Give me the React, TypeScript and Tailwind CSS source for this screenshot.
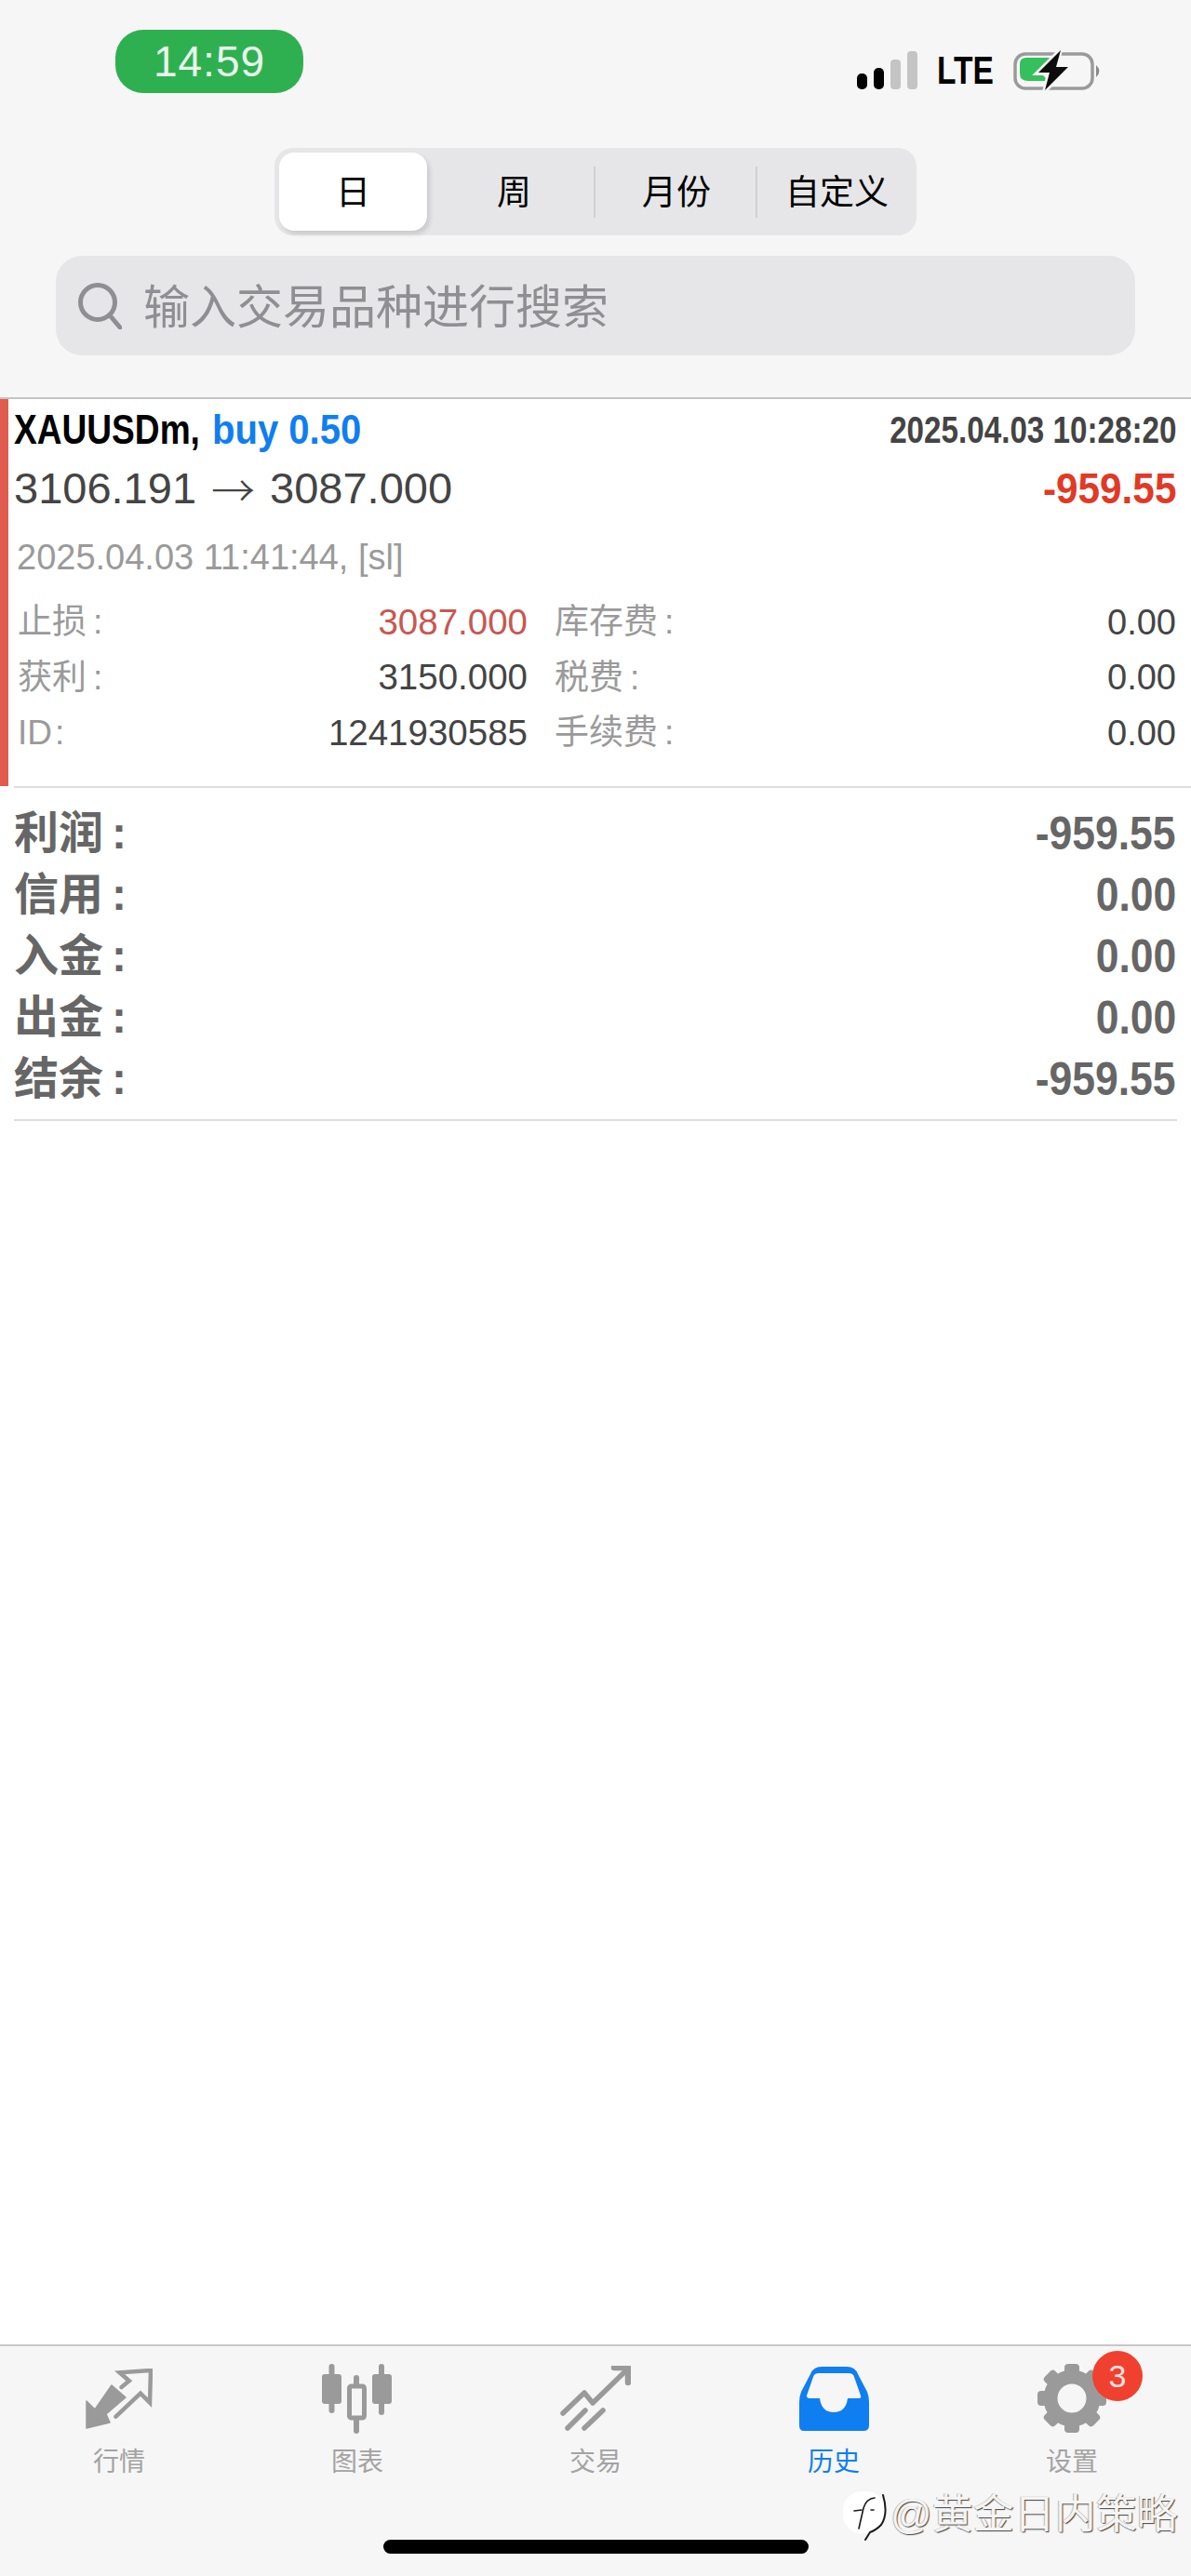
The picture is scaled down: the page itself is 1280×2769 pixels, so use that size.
import React from "react";

const FONT = "font-['Liberation_Sans','Noto_Sans_CJK_SC',sans-serif]";

function Signal() {
  return (
    <div className="flex items-end gap-[7px] h-[41px]">
      <div className="w-[11px] h-[17px] rounded-[5px] bg-black" />
      <div className="w-[11px] h-[23px] rounded-[5px] bg-black" />
      <div className="w-[11px] h-[32px] rounded-[4px] bg-[#c4c4c4]" />
      <div className="w-[11px] h-[41px] rounded-[4px] bg-[#c4c4c4]" />
    </div>
  );
}

function Battery() {
  return (
    <svg width="96" height="46" viewBox="0 0 96 46" className="block">
      <rect x="2" y="5" width="83" height="37" rx="11" fill="none" stroke="#9a9a9a" strokeWidth="3.5" />
      <path d="M10 9 H44 L31 27 L38 34 H16 Q7 34 7 26 V16 Q7 9 14 9 Z" fill="#35c05c" />
      <path d="M89 17 Q96 23 89 30 Z" fill="#8a8a8a" />
      <path d="M51 0 L25 26 H38 L33 46 L61 18 H47 Z" fill="#f6f6f6" stroke="#f6f6f6" strokeWidth="4" />
      <path d="M51 1 L27 25 H39 L34 44 L59 19 H46 Z" fill="#0c0c0c" />
    </svg>
  );
}

function Header() {
  return (
    <header className="bg-[#f6f6f6] h-[427px] flex flex-col">
      <div className="flex justify-between pl-[124px] pr-[95px] pt-[32px]">
        <div className="w-[202px] h-[68px] rounded-[30px] bg-[#2fb050] flex items-center justify-center text-[#e9f7ec] text-[46px] tracking-[1px]">
          14:59
        </div>
        <div className="flex items-start pt-[23px] gap-[21px]">
          <Signal />
          <div className="w-[61px] h-[41px] flex items-center">
            <span className="inline-block origin-left scale-x-[.78] text-[43px] font-bold text-black leading-none whitespace-nowrap">LTE</span>
          </div>
          <div className="-mt-[2px]">
            <Battery />
          </div>
        </div>
      </div>
      <div className="mt-[59px] mx-auto w-[690px] h-[94px] rounded-[20px] bg-[#e6e6e8] flex items-center text-[37px] text-black relative">
        <div className="ml-[5px] w-[159px] h-[84px] rounded-[16px] bg-white shadow-[3px_4px_5px_rgba(0,0,0,0.12)] flex items-center justify-center pt-[4px]">日</div>
        <div className="w-[181px] h-[55px] border-r-2 border-[#d0d0d2] flex items-center justify-center pl-[8px] pt-[3px]">周</div>
        <div className="w-[174px] h-[55px] border-r-2 border-[#d0d0d2] flex items-center justify-center pl-[2px] pt-[3px]">月份</div>
        <div className="flex-1 flex items-center justify-center pt-[3px]">自定义</div>
      </div>
      <div className="mt-[22px] mx-[60px] h-[107px] rounded-[28px] bg-[#e6e6e8] flex items-center pl-[23px] gap-[23px]">
        <svg width="48" height="50" viewBox="0 0 48 50" fill="none" stroke="#8e8e93" strokeWidth="5" strokeLinecap="round">
          <circle cx="22" cy="21" r="18.5" />
          <path d="M35 35 L46 48" />
        </svg>
        <span className="text-[50px] text-[#8e8e93] leading-none pt-[5px]">输入交易品种进行搜索</span>
      </div>
    </header>
  );
}

function Label(props: { text: string; className: string; gap: string }) {
  return (
    <span className={"whitespace-nowrap leading-none " + props.className}>
      {props.text}
      <span className={props.gap}>:</span>
    </span>
  );
}

function DetailRow(props: { l1: string; v1: string; l2: string; v2: string; red?: boolean; latin?: boolean }) {
  return (
    <div className="flex h-[59.5px] items-center">
      <div className="w-[552px] pl-[4px] flex justify-between items-center">
        <Label text={props.l1} className="text-[37px] text-[#9a9a9a]" gap={props.latin ? "ml-[3px]" : "ml-[7px]"} />
        <span className={"text-[38.5px] leading-none " + (props.red ? "text-[#c9574f]" : "text-[#444444]")}>{props.v1}</span>
      </div>
      <div className="flex-1 pl-[29px] flex justify-between items-center">
        <Label text={props.l2} className="text-[37px] text-[#9a9a9a]" gap="ml-[7px]" />
        <span className="text-[38px] text-[#444444] leading-none">{props.v2}</span>
      </div>
    </div>
  );
}

function Trade() {
  return (
    <section className="border-t-2 border-[#c4c4c4] bg-white">
      <div className="flex h-[416px]">
        <div className="w-[9px] bg-[#e05c50]" />
        <div className="flex-1 pl-[6px] pr-[16px] flex flex-col">
          <div className="flex justify-between items-center h-[66px]">
            <div className="flex items-center">
              <div className="w-[213px]">
                <span className="inline-block origin-left scale-x-[.843] text-[44px] font-bold leading-none whitespace-nowrap text-black">XAUUSDm,</span>
              </div>
              <span className="inline-block origin-left scale-x-[.91] text-[44px] font-bold leading-none whitespace-nowrap text-[#0f7ef0]">buy 0.50</span>
            </div>
            <span className="inline-block origin-right scale-x-[.83] text-[40px] font-bold leading-none whitespace-nowrap text-[#444444]">
              2025.04.03 10:28:20
            </span>
          </div>
          <div className="flex justify-between items-center h-[58px]">
            <span className="flex items-center text-[47px] leading-none text-[#444444] whitespace-nowrap">
              3106.191
              <span className="font-['Noto_Sans_CJK_SC',sans-serif] font-light mx-[16px] w-[47px] text-center">→</span>
              3087.000
            </span>
            <span className="inline-block origin-right scale-x-[.9] text-[47px] font-bold leading-none text-[#e03a26]">-959.55</span>
          </div>
          <div className="h-[48px] mt-[22px] flex items-center pl-[3px] text-[38px] leading-none text-[#9a9a9a] whitespace-nowrap">
            2025.04.03 11:41:44, [sl]
          </div>
          <div className="mt-[16px]">
            <DetailRow l1="止损" v1="3087.000" l2="库存费" v2="0.00" red />
            <DetailRow l1="获利" v1="3150.000" l2="税费" v2="0.00" />
            <DetailRow l1="ID" v1="1241930585" l2="手续费" v2="0.00" latin />
          </div>
        </div>
      </div>
      <div className="ml-[15px] h-[2px] bg-[#dedede]" />
    </section>
  );
}

function SumRow(props: { label: string; value: string }) {
  return (
    <div className="flex justify-between items-center h-[66px] text-[#666666]">
      <Label text={props.label} className="text-[48px] font-bold" gap="ml-[9px]" />
      <span className="inline-block origin-right scale-x-[.89] text-[50px] font-bold leading-none">{props.value}</span>
    </div>
  );
}

function Summary() {
  return (
    <section className="mx-[15px] pt-[16px] pb-[10px] border-b-2 border-[#dedede] pr-[1px]">
      <SumRow label="利润" value="-959.55" />
      <SumRow label="信用" value="0.00" />
      <SumRow label="入金" value="0.00" />
      <SumRow label="出金" value="0.00" />
      <SumRow label="结余" value="-959.55" />
    </section>
  );
}

function QuotesIcon() {
  return (
    <svg width="72" height="65" viewBox="0 0 72 65">
      <path d="M1 35 L10 44 L28 18 L43 31 L22 49 L26 58 L1 64 Z" fill="#9a9a9a" stroke="#9a9a9a" strokeWidth="1.5" strokeLinejoin="round" />
      <path d="M38.6 20 L46.8 13.3 L36.5 4.3 L70 2 L69 36.7 L59 26.7 L32.5 51.7" fill="none" stroke="#9a9a9a" strokeWidth="4.5" strokeLinecap="round" />
    </svg>
  );
}

function ChartIcon() {
  return (
    <svg width="76" height="75" viewBox="0 0 76 75" fill="#9a9a9a">
      <rect x="7.5" y="0" width="6" height="53" rx="3" />
      <rect x="0" y="11" width="21" height="32" rx="3" />
      <rect x="34" y="12" width="6" height="63" rx="3" />
      <rect x="29.5" y="24" width="16" height="34" rx="2" fill="#f6f6f6" stroke="#9a9a9a" strokeWidth="5" />
      <rect x="61" y="0" width="6" height="55" rx="3" />
      <rect x="54" y="11" width="21" height="32" rx="3" />
    </svg>
  );
}

function TradeIcon() {
  return (
    <svg width="76" height="70" viewBox="12 12 76 70" fill="none" stroke="#9a9a9a" strokeWidth="5.5" strokeLinecap="round" strokeLinejoin="round">
      <path d="M15 63 L38 41 L47 52 L82 18" />
      <path d="M70 14 L85 14 L85 30" strokeWidth="6.5" />
      <path d="M20 79 L39 60" />
      <path d="M38 79 L58 60" />
    </svg>
  );
}

function HistoryIcon() {
  return (
    <svg width="75" height="69" viewBox="0 0 75 69">
      <path
        fillRule="evenodd"
        fill="#0f7ef0"
        d="M24 0 H51 Q60 0 63 8 L73 27 Q75 32 75 38 V63 Q75 69 69 69 H5 Q0 69 0 63 V38 Q0 32 2 27 L12 8 Q15 0 24 0 Z M21 7 Q16 7 15 11 L8 31 Q8 34 11 34 H22 Q24 49 37 49 Q50 49 52 34 H64 Q67 34 66 31 L59 11 Q58 7 53 7 Z"
      />
    </svg>
  );
}

function GearIcon() {
  const teeth = [0, 45, 90, 135, 180, 225, 270, 315];
  return (
    <svg width="76" height="76" viewBox="-38 -38 76 76">
      <circle r="23" fill="none" stroke="#9a9a9a" strokeWidth="15" />
      {teeth.map((a) => (
        <rect key={a} x="-8" y="-37" width="16" height="13" rx="4" fill="#9a9a9a" transform={`rotate(${a})`} />
      ))}
    </svg>
  );
}

function WatermarkLogo() {
  return (
    <svg width="50" height="62" viewBox="0 0 50 62" fill="none" stroke="#1a1a1a" strokeWidth="1.6" strokeLinecap="round">
      <rect x="1" y="6" width="45" height="45" rx="20" fill="#ffffff" stroke="none" />
      <path d="M44 10 Q50 30 42 42 Q36 48 30 50 L25 58" strokeWidth="2" />
      <path d="M35 13 Q26 14 23 24 L18 46" />
      <path d="M13 27 L21 26" />
      <path d="M31 26 L34 26" />
    </svg>
  );
}

function NavItem(props: { icon: React.ReactNode; label: string; active?: boolean; badge?: string }) {
  return (
    <div className="flex flex-col items-center relative">
      <div className="h-[92px] flex items-center justify-center relative pt-[2px]">
        {props.icon}
        {props.badge ? (
          <div className="absolute -top-[4px] left-[60px] w-[54px] h-[54px] rounded-full bg-[#f04030] text-[#fbe3df] text-[34px] flex items-center justify-center leading-none">
            {props.badge}
          </div>
        ) : null}
      </div>
      <div className={"text-[28px] leading-none mt-[10px] " + (props.active ? "text-[#0f7ef0]" : "text-[#a3a3a3]")}>{props.label}</div>
    </div>
  );
}

function Nav() {
  return (
    <nav className="h-[249px] bg-[#f6f6f6] border-t-2 border-[#c8c8c8] relative pt-[9px]">
      <div className="grid grid-cols-5">
        <NavItem icon={<QuotesIcon />} label="行情" />
        <NavItem icon={<ChartIcon />} label="图表" />
        <NavItem icon={<TradeIcon />} label="交易" />
        <NavItem icon={<HistoryIcon />} label="历史" active />
        <NavItem icon={<GearIcon />} label="设置" badge="3" />
      </div>
      <div className="absolute left-[412px] top-[208px] w-[457px] h-[15px] rounded-full bg-black" />
      <div className="absolute left-[905px] top-[150px] flex items-center gap-[2px]">
        <WatermarkLogo />
        <span className="text-[44px] leading-none text-[#f4f4f4] whitespace-nowrap [text-shadow:1px_1px_1px_#444,-1px_0_0_#bbb]">
          @黄金日内策略
        </span>
      </div>
    </nav>
  );
}

export default function App() {
  return (
    <div className={"w-[1280px] h-[2769px] bg-white flex flex-col overflow-hidden " + FONT}>
      <Header />
      <Trade />
      <Summary />
      <div className="flex-1" />
      <Nav />
    </div>
  );
}
